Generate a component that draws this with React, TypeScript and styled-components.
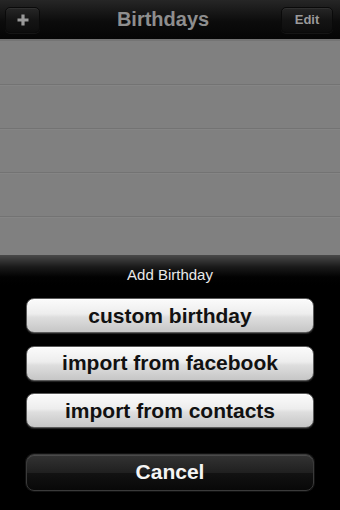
import React from "react";
import styled, { createGlobalStyle } from "styled-components";

const Global = createGlobalStyle`
  html, body { margin: 0; padding: 0; background: #000; }
  body { font-family: "Liberation Sans", Arial, sans-serif; }
`;

const Screen = styled.div`
  width: 340px;
  height: 510px;
  display: flex;
  flex-direction: column;
  overflow: hidden;
  background: #000;
`;

const NavBar = styled.div`
  height: 39px;
  flex: none;
  display: flex;
  align-items: center;
  justify-content: space-between;
  padding: 0 7px 0 5px;
  box-sizing: border-box;
  background: linear-gradient(#262626, #0c0c0c 55%, #050505);
`;

const NavButton = styled.div<{ $w: number }>`
  width: ${(p) => p.$w}px;
  height: 26px;
  box-sizing: border-box;
  border-radius: 5px;
  border: 1px solid #0a0a0a;
  background: linear-gradient(#262626, #141414 50%, #0d0d0d);
  box-shadow: 0 1px 0 rgba(255, 255, 255, 0.06), inset 0 1px 0 rgba(255, 255, 255, 0.05);
  display: flex;
  align-items: center;
  justify-content: center;
  color: #9a9a9a;
  font-weight: bold;
  font-size: 13px;
`;

const Title = styled.div`
  color: #8e8e8e;
  font-weight: bold;
  font-size: 20px;
  margin-left: 5px;
`;

const List = styled.div`
  height: 216px;
  flex: none;
  background: #808080;
  border-top: 2px solid #747474;
  box-sizing: border-box;
  display: flex;
  flex-direction: column;
`;

const Row = styled.div`
  height: 44px;
  flex: none;
  border-bottom: 1.5px solid #737373;
  box-sizing: border-box;
  box-shadow: 0 1px 0 #858585;
`;

const Sheet = styled.div`
  flex: 1;
  display: flex;
  flex-direction: column;
  align-items: center;
  padding-top: 12px;
  background: linear-gradient(#4a4a4a 0px, #1a1a1a 12px, #020202 22px, #000 30px);
`;

const SheetTitle = styled.div`
  color: #e8e8e8;
  font-size: 15px;
  line-height: 16px;
  margin-bottom: 15px;
`;

const SheetButton = styled.div<{ $cancel?: boolean }>`
  width: 288px;
  height: ${(p) => (p.$cancel ? 37 : 35)}px;
  box-sizing: border-box;
  border-radius: 8px;
  display: flex;
  align-items: center;
  justify-content: center;
  font-weight: bold;
  font-size: 21px;
  margin-top: ${(p) => (p.$cancel ? 13 : 0)}px;
  margin-bottom: 12.5px;
  color: ${(p) => (p.$cancel ? "#f4f4f4" : "#111")};
  border: 1px solid ${(p) => (p.$cancel ? "#3a3a3a" : "#5a5a5a")};
  background: ${(p) =>
    p.$cancel
      ? "linear-gradient(#333, #202020 50%, #121212 52%, #080808)"
      : "linear-gradient(#fbfbfb, #ededed 45%, #dedede 55%, #c6c6c6)"};
  box-shadow: ${(p) =>
    p.$cancel
      ? "0 0 0 1px #111, inset 0 1px 0 rgba(255,255,255,0.12)"
      : "0 1px 1px rgba(255,255,255,0.15), inset 0 1px 0 #fff"};
`;

const PlusIcon = () => (
  <svg width="14" height="14" viewBox="0 0 14 14">
    <path d="M7 1.5v11M1.5 7h11" stroke="#9a9a9a" strokeWidth="3.2" strokeLinecap="butt" />
  </svg>
);

export default function App() {
  return (
    <Screen>
      <Global />
      <NavBar>
        <NavButton $w={35}>
          <PlusIcon />
        </NavButton>
        <Title>Birthdays</Title>
        <NavButton $w={52}>Edit</NavButton>
      </NavBar>
      <List>
        {[0, 1, 2, 3, 4].map((i) => (
          <Row key={i} />
        ))}
      </List>
      <Sheet>
        <SheetTitle>Add Birthday</SheetTitle>
        <SheetButton>custom birthday</SheetButton>
        <SheetButton>import from facebook</SheetButton>
        <SheetButton>import from contacts</SheetButton>
        <SheetButton $cancel>Cancel</SheetButton>
      </Sheet>
    </Screen>
  );
}
